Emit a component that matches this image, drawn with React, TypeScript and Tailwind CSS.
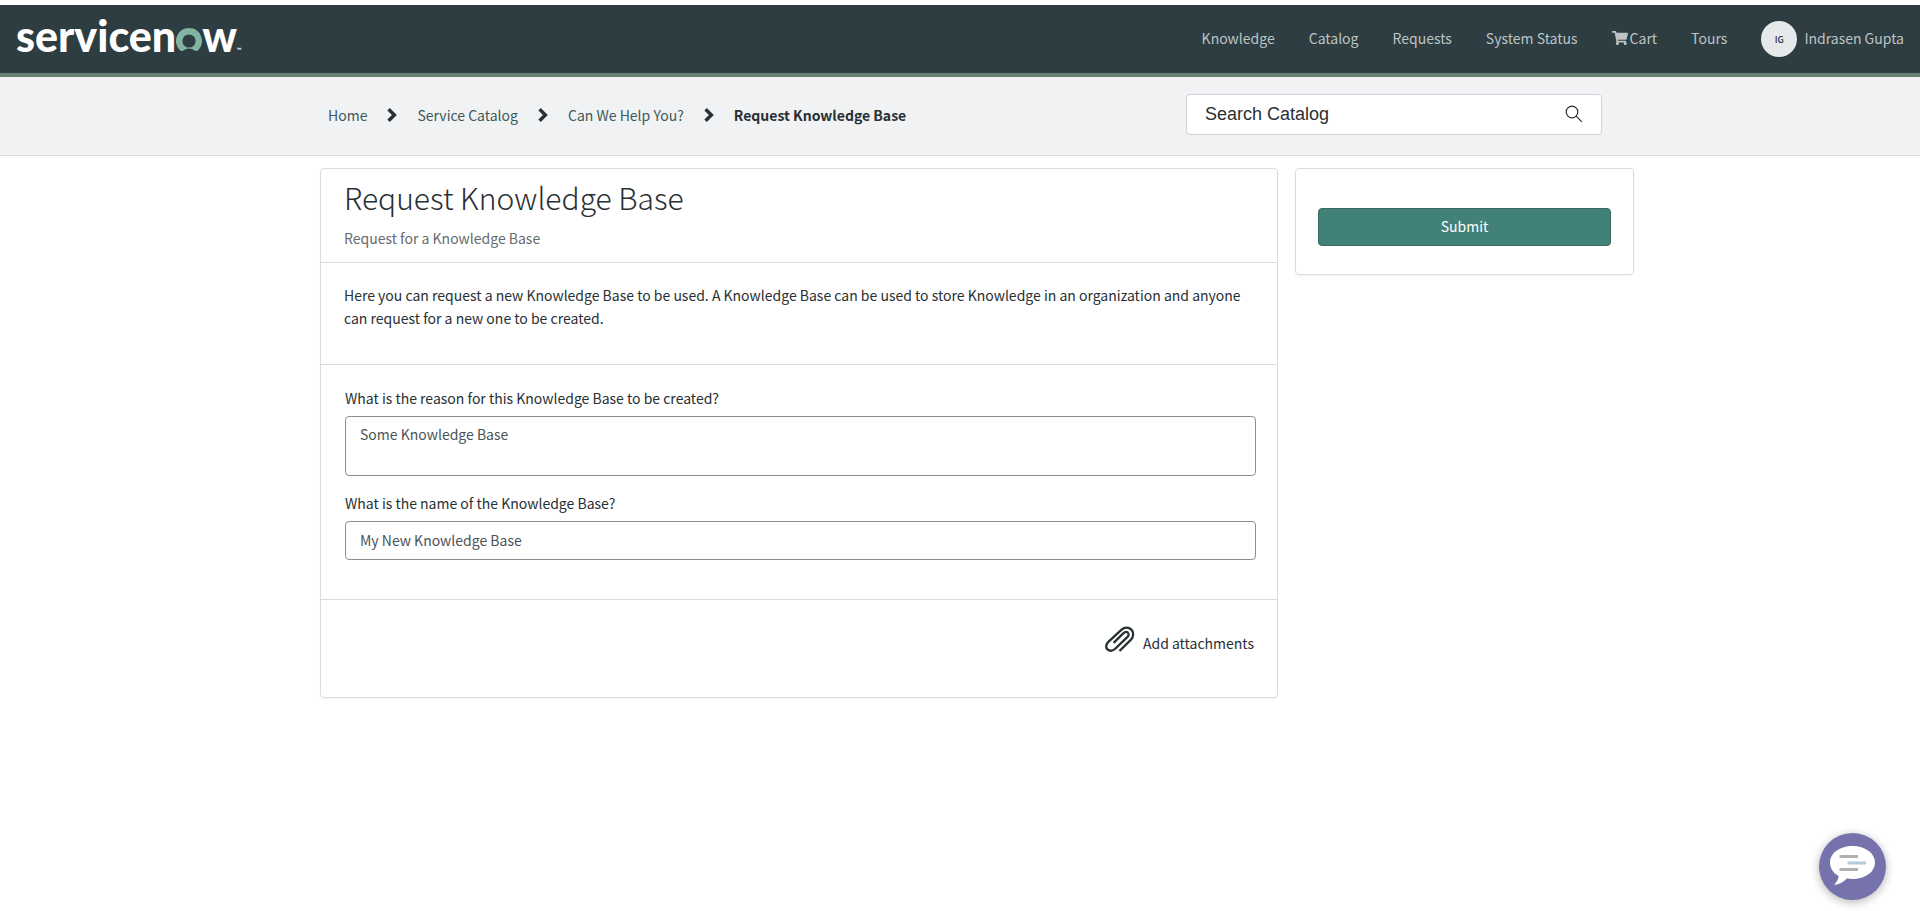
import { FaShoppingCart } from "react-icons/fa";

const navLinks = ["Knowledge", "Catalog", "Requests", "System Status"];
const crumbs = ["Home", "Service Catalog", "Can We Help You?"];

function Logo() {
  return (
    <a href="#" aria-label="servicenow" className="flex items-baseline pb-1.5 font-['Lato'] text-[43px] leading-[52px] font-black text-white">
      <span>servicen</span>
      <svg viewBox="0 0 26 24" className="h-6 w-[26px]" fill="#81b5a1">
        <path d="M13 0A13 13 0 0 0 3.9 22.2C4.9 23.2 6.3 23.2 7.4 22.4A9 9 0 0 1 18.6 22.4C19.7 23.2 21.1 23.2 22.1 22.2A13 13 0 0 0 13 0ZM13 19.6A6.6 6.6 0 1 1 13 6.4A6.6 6.6 0 0 1 13 19.6Z" />
      </svg>
      <span>w</span>
      <span className="text-[6px] leading-none">™</span>
    </a>
  );
}

function Chevron() {
  return (
    <svg viewBox="0 0 10 14" className="h-[14px] w-[10px]" fill="none" stroke="#293033" strokeWidth="3.4">
      <path d="M1.6 1.2L7.4 7L1.6 12.8" />
    </svg>
  );
}

function SearchIcon() {
  return (
    <svg viewBox="0 0 18 18" className="size-[18px]" fill="none" stroke="#293033" strokeWidth="1.2">
      <circle cx="7" cy="7" r="5.8" />
      <path d="M11.2 11.2L16.8 16.8" />
    </svg>
  );
}

function PaperClip() {
  return (
    <svg viewBox="0 0 30 26" className="h-[26px] w-[30px]" fill="none" stroke="#293033" strokeWidth="2.3">
      <path d="M14.5 25L26 13.6C28.7 10.9 28.9 6.2 26.4 3.6C23.8 .9 19.4 1 16.6 3.6L3.6 15.6C.8 18.2 .5 21.4 2.5 23.4C4.5 25.4 7.8 25.2 10.2 22.8L22.3 11.2C23.9 9.6 24 7.8 22.9 6.7C21.7 5.6 20 5.8 18.5 7.2L8.6 16.8" />
    </svg>
  );
}

function ChatIcon() {
  return (
    <svg viewBox="0 0 67 67" className="size-[67px]">
      <path d="M33.5 13C46 13 56 20 56 29.5S46 46 33.5 46C31.5 46 29.5 45.8 27.8 45.5C24.5 49 20 51.5 15 52C17.5 49.5 19.5 46 19.6 43C14.2 40 11 35.2 11 29.5C11 20 21 13 33.5 13Z" fill="#fff" />
      <path d="M20.5 23.5H39M20.5 36.5H39" stroke="#b0b2b2" strokeWidth="3" />
      <path d="M28.5 30H47" stroke="#b5cbd6" strokeWidth="3" />
    </svg>
  );
}

export default function App() {
  return (
    <div className="min-h-screen bg-white pt-[5px] font-['Noto_Sans_CJK_SC','Noto_Sans',sans-serif] text-[14px] leading-[23px] text-[#293033]">
      <header className="flex h-[72px] items-center justify-between border-b-4 border-[#678073] bg-[#2e3d42] px-4">
        <Logo />
        <nav className="flex items-center gap-[34px] text-[#bcc4c5]">
          {navLinks.map((label) => (
            <a key={label} href="#" className="pb-0.5">{label}</a>
          ))}
          <a href="#" className="flex items-center gap-0.5 pb-0.5">
            <FaShoppingCart className="size-4" /> Cart
          </a>
          <a href="#" className="pb-0.5">Tours</a>
          <a href="#" className="flex items-center gap-[7px]">
            <span className="flex size-9 items-center justify-center rounded-full bg-[#e6e8e9] text-[9px] font-medium text-[#293033]">IG</span>
            <span className="pb-0.5">Indrasen Gupta</span>
          </a>
        </nav>
      </header>

      <div className="border-b border-[#dadddf] bg-[#f1f2f4] pl-[34px]">
        <div className="mx-auto flex h-[78px] max-w-[1314px] items-center justify-between pr-8 pb-1 pl-2">
          <nav aria-label="Breadcrumb" className="flex items-center gap-5 pt-0.5">
            {crumbs.map((label) => (
              <span key={label} className="flex items-center gap-5">
                <a href="#" className="text-[#3b5a5a]">{label}</a>
                <Chevron />
              </span>
            ))}
            <span className="font-bold">Request Knowledge Base</span>
          </nav>
          <form className="flex h-[41px] w-[416px] items-center rounded border border-[#cfd3d7] bg-white px-[18px]">
            <input
              aria-label="Search Catalog"
              placeholder="Search Catalog"
              className="min-w-0 flex-1 font-['Liberation_Sans',sans-serif] text-[18px] outline-none placeholder:text-[#293033]"
            />
            <button type="button" aria-label="Search"><SearchIcon /></button>
          </form>
        </div>
      </div>

      <div className="pt-3 pl-[34px]">
        <div className="mx-auto flex max-w-[1314px] items-start gap-[17px]">
          <main className="flex-1 divide-y divide-[#dadddf] rounded border border-[#dadddf] shadow-xs">
            <div className="px-[23px] pt-2 pb-3">
              <h1 className="text-[30px] leading-[40px] font-light">Request Knowledge Base</h1>
              <p className="mt-2.5 text-[#666b6d]">Request for a Knowledge Base</p>
            </div>
            <p className="px-[23px] pt-[21px] pb-[34px]">
              Here you can request a new Knowledge Base to be used. A Knowledge Base can be used to store Knowledge in an organization and anyone can request for a new one to be created.
            </p>
            <div className="flex flex-col pt-[22px] pr-[21px] pb-[39px] pl-6">
              <label htmlFor="reason">What is the reason for this Knowledge Base to be created?</label>
              <textarea
                id="reason"
                defaultValue="Some Knowledge Base"
                className="mt-1.5 h-[60px] resize-none rounded border border-[#8b8f92] px-3.5 py-1.5 text-[#4c5356] outline-none"
              />
              <label htmlFor="kb-name" className="mt-4">What is the name of the Knowledge Base?</label>
              <input
                id="kb-name"
                defaultValue="My New Knowledge Base"
                className="mt-1.5 h-[39px] rounded border border-[#8b8f92] px-3.5 pb-0.5 text-[#4c5356] outline-none"
              />
            </div>
            <div className="flex justify-end pt-[26px] pr-[23px] pb-[42px]">
              <button type="button" className="flex items-start gap-2">
                <PaperClip />
                <span className="pt-1.5">Add attachments</span>
              </button>
            </div>
          </main>

          <aside className="w-[339px] rounded border border-[#dadddf] px-[22px] pt-[39px] pb-7 shadow-xs">
            <button type="button" className="h-[38px] w-full rounded border border-[#38695f] bg-[#428177] pb-0.5 text-white">
              Submit
            </button>
          </aside>
        </div>
      </div>

      <button
        type="button"
        aria-label="Open chat"
        className="fixed right-[34px] bottom-[11px] rounded-full bg-[#7672ab] shadow-[0_2px_10px_rgba(0,0,0,0.3)]"
      >
        <ChatIcon />
      </button>
    </div>
  );
}
